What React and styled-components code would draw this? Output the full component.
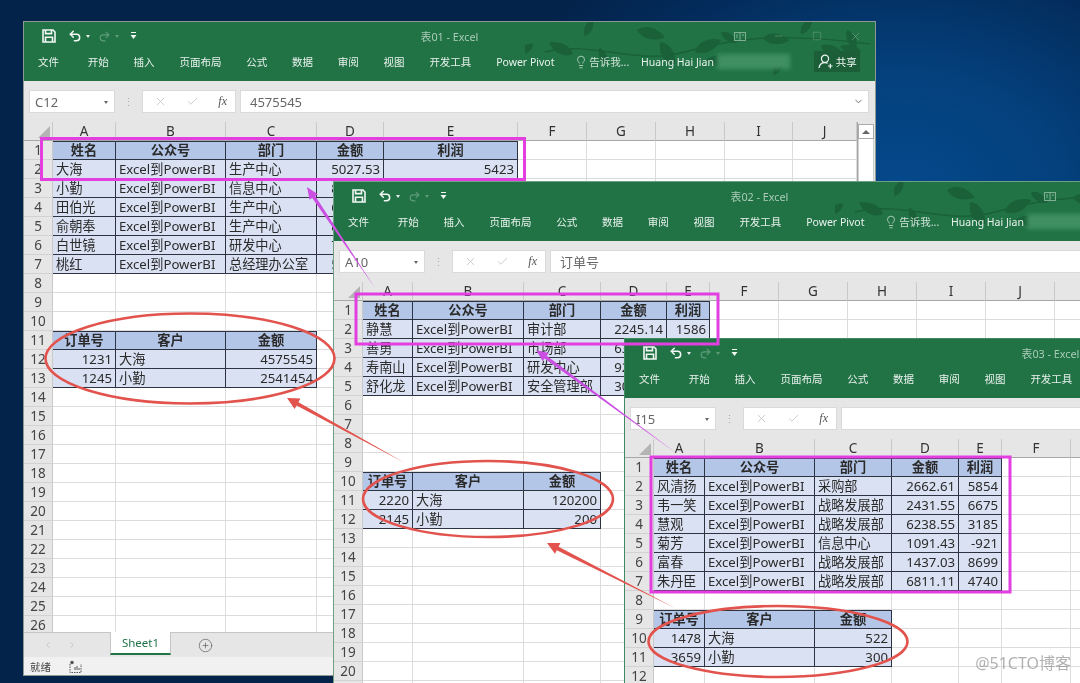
import React from 'react';
import styled, { createGlobalStyle } from 'styled-components';
import { Undo2, Redo2, Lightbulb, X, Check, Square, Minus, ChevronDown, ChevronLeft, ChevronRight, CirclePlus } from 'lucide-react';

const FONT = '"Noto Sans", "Noto Sans CJK SC", sans-serif';
const GREEN = '#217346';
const RED = '#e2534d';
const PINK = '#e23ee0';

const Global = createGlobalStyle`
  html, body { margin: 0; padding: 0; background: #04264f; }
  body { font-family: ${FONT}; }
`;

const Desktop = styled.div`
  position: relative;
  width: 1080px;
  height: 683px;
  overflow: hidden;
  filter: blur(0.45px);
  background: radial-gradient(ellipse 420px 300px at 900px 190px, #05498c 0%, #04407c 40%, #032c5c 75%, #03234b 100%), #03234b;
`;

const Win = styled.div`
  position: absolute;
  left: ${p => p.$x}px;
  top: ${p => p.$y}px;
  width: 851px;
  display: flex;
  flex-direction: column;
  background: #e6e6e6;
  box-shadow: 0 0 0 1px ${p => p.$edge};
`;

const Ribbon = styled.div`
  position: relative;
  height: 59px;
  background: ${GREEN};
  display: flex;
  flex-direction: column;
`;

const LeafArt = styled.svg`
  position: absolute;
  right: 0;
  top: 0;
`;

const TitleRow = styled.div`
  position: relative;
  height: 28px;
  display: grid;
  grid-template-columns: 1fr auto 1fr;
  align-items: center;
`;

const Quick = styled.div`
  display: flex;
  align-items: center;
  gap: ${p => p.$gap || 0}px;
  padding-left: 18px;
  color: #f2f7f4;
`;

const SaveSlot = styled.span`
  display: flex;
  margin-right: 12px;
`;

const Caret = styled.span`
  width: 0;
  height: 0;
  margin: 1px ${p => p.$after || 0}px 0 4px;
  border-left: 2.5px solid transparent;
  border-right: 2.5px solid transparent;
  border-top: 3px solid ${p => (p.$dim ? '#5f9c7c' : p.$gray ? '#666' : '#e8f0eb')};
`;

const WinTitle = styled.div`
  font-size: 10.8px;
  color: #a9cbb7;
`;

const Controls = styled.div`
  display: flex;
  justify-content: flex-end;
  align-items: center;
  gap: 27px;
  padding-right: 13px;
  color: #7fae93;
`;

const TabRow = styled.div`
  position: relative;
  flex: 1;
  display: flex;
  align-items: center;
  gap: 24.8px;
  padding: 0 15px 8px 14px;
  font-size: 10.5px;
  color: #e9f2ed;
  white-space: nowrap;
`;

const FileTab = styled.span`
  margin-right: 4px;
`;

const Tell = styled.span`
  display: flex;
  align-items: center;
  gap: 1px;
  margin-left: -5px;
  margin-right: -13px;
  color: #cfe2d7;
`;

const Smudge = styled.span`
  width: 80px;
  height: 15px;
  margin-left: -22px;
  background: #3f8f62;
  filter: blur(2px);
`;

const Share = styled.span`
  margin-left: auto;
  width: 50px;
  height: 21px;
  display: flex;
  align-items: center;
  justify-content: center;
  gap: 3px;
  background: #1b5e38;
  color: #f2f7f4;
`;

const FormulaBar = styled.div`
  height: 41px;
  box-sizing: border-box;
  padding: 9px 6px 9px 5px;
  display: flex;
  align-items: stretch;
  background: #e6e6e6;
  font-size: 13px;
  color: #666;
`;

const NameBox = styled.div`
  width: 86px;
  box-sizing: border-box;
  padding: 0 6px 0 5px;
  display: flex;
  align-items: center;
  justify-content: space-between;
  background: #fff;
  border: 1px solid #dadada;
`;

const Grip = styled.div`
  width: 27px;
  display: flex;
  align-items: center;
  justify-content: center;
  color: #aaa;
  font-size: 11px;
`;

const FxBox = styled.div`
  width: 94px;
  box-sizing: border-box;
  padding: 0 8px 0 11px;
  display: flex;
  align-items: center;
  justify-content: space-between;
  background: #fff;
  border: 1px solid #dadada;
  color: #c6c6c6;
`;

const Fx = styled.i`
  font-family: "Liberation Serif", serif;
  font-size: 12px;
  color: #555;
`;

const Input = styled.div`
  flex: 1;
  margin-left: 4px;
  box-sizing: border-box;
  padding: 0 4px 0 9px;
  display: flex;
  align-items: center;
  background: #fff;
  border: 1px solid #dadada;
  & > svg {
    margin-left: auto;
  }
`;

const SheetArea = styled.div`
  height: 510px;
  display: flex;
`;

const Sheet = styled.div`
  width: 833px;
  height: 510px;
  overflow: hidden;
  flex: none;
  display: grid;
  grid-template-columns: ${p => p.$cols};
  grid-auto-rows: 19px;
  background: #fff;
  border-right: 1px solid #a6a6a6;
`;

const Corner = styled.div`
  position: relative;
  background: #e6e6e6;
  border-right: 1px solid #c9c9c9;
  border-bottom: 1px solid #a8a8a8;
  &::after {
    content: '';
    position: absolute;
    right: 2px;
    bottom: 2px;
    border-left: 12px solid transparent;
    border-bottom: 12px solid #b4b4b4;
  }
`;

const ColHead = styled.div`
  display: flex;
  align-items: center;
  justify-content: center;
  background: #e6e6e6;
  border-right: 1px solid #c9c9c9;
  border-bottom: 1px solid #a8a8a8;
  font-size: 13.5px;
  color: #333;
`;

const RowHead = styled.div`
  display: flex;
  align-items: center;
  justify-content: center;
  background: #e6e6e6;
  border-right: 1px solid #c9c9c9;
  border-bottom: 1px solid #d2d2d2;
  font-size: 13.5px;
  color: #444;
`;

const cellBg = { head: '#b4c6e7', body: '#d9e1f2', plain: '#fff' };

const Cell = styled.div`
  min-width: 0;
  padding: 0 3px 1px;
  display: flex;
  align-items: center;
  justify-content: ${p => (p.$kind === 'head' ? 'center' : p.$right ? 'flex-end' : 'flex-start')};
  background: ${p => cellBg[p.$kind]};
  border-right: 1px solid ${p => (p.$kind === 'plain' ? '#dcdcdc' : '#2d3340')};
  border-bottom: 1px solid ${p => (p.$kind === 'plain' ? '#dcdcdc' : '#2d3340')};
  ${p => p.$kind === 'head' && 'box-shadow: inset 0 1px 0 #2d3340;'}
  font-size: 13.2px;
  font-weight: ${p => (p.$kind === 'head' ? 700 : 400)};
  color: #2a2a2a;
  white-space: nowrap;
`;

const Scroll = styled.div`
  flex: 1;
  display: flex;
  flex-direction: column;
  align-items: center;
  padding: 2px 2px 0 0;
`;

const ScrollBtn = styled.div`
  width: 14px;
  height: 13px;
  display: flex;
  align-items: center;
  justify-content: center;
  background: #fff;
  border: 1px solid #ababab;
  &::after {
    content: '';
    border-left: 4px solid transparent;
    border-right: 4px solid transparent;
    border-bottom: 4px solid #666;
  }
`;

const Thumb = styled.div`
  width: 14px;
  flex: 1;
  background: #fff;
  border: 1px solid #cfcfcf;
  border-top: none;
`;

const TabBar = styled.div`
  height: 25px;
  box-sizing: border-box;
  display: flex;
  align-items: flex-start;
  border-top: 1px solid #c6c6c6;
  padding-left: 19px;
  color: #c0c0c0;
`;

const Nav = styled.div`
  width: 67px;
  height: 24px;
  display: flex;
  align-items: center;
  gap: 14px;
`;

const SheetTab = styled.div`
  width: 59px;
  height: 21px;
  margin-top: -1px;
  display: flex;
  align-items: center;
  justify-content: center;
  background: #fff;
  border-left: 1px solid #c6c6c6;
  border-right: 1px solid #c6c6c6;
  border-bottom: 2px solid ${GREEN};
  font-size: 11.5px;
  color: ${GREEN};
`;

const AddSheet = styled.div`
  margin-left: 27px;
  height: 24px;
  display: flex;
  align-items: center;
  color: #666;
`;

const StatusBar = styled.div`
  height: 18px;
  display: flex;
  align-items: center;
  gap: 18px;
  padding-left: 6px;
  background: #f1f1f1;
  font-size: 10.5px;
  color: #444;
`;

const Marks = styled.svg`
  position: absolute;
  left: 0;
  top: 0;
  pointer-events: none;
`;

const Watermark = styled.div`
  position: absolute;
  right: 9px;
  bottom: 9px;
  font-size: 16px;
  color: rgba(125, 125, 125, 0.6);
`;

function SaveIcon() {
  return (
    <svg width="14" height="14" viewBox="0 0 14 14" fill="none" stroke="currentColor" strokeWidth="1.6">
      <path d="M1 1h10l2 2v10H1z" />
      <path d="M3.5 1v3.6h6V1M3.5 13V8.2h7V13" />
    </svg>
  );
}

function QatIcon() {
  return (
    <svg width="7" height="8" viewBox="0 0 7 8" fill="currentColor">
      <path d="M1 0h5v1H1zM0.5 3h6L3.5 7z" />
    </svg>
  );
}

function ShareIcon() {
  return (
    <svg width="15" height="15" viewBox="0 0 15 15" fill="none" stroke="currentColor" strokeWidth="1.2">
      <circle cx="7" cy="4.8" r="3.6" />
      <path d="M1 14c.4-3.2 2.6-5.4 6-5.4 1 0 1.8.2 2.6.6M10 12h4.6M12.3 9.8v4.6" />
    </svg>
  );
}

function StatusIcon() {
  return (
    <svg width="13" height="13" viewBox="0 0 13 13" fill="none" stroke="#555" strokeWidth="1">
      <path d="M1 4v8.5h11V4" strokeDasharray="1.5 1" />
      <circle cx="3" cy="2.5" r="1.8" fill="#555" stroke="none" />
      <path d="M6 10V7M8 10V6M10 10V8" />
    </svg>
  );
}

function RibbonDisplayIcon() {
  return (
    <svg width="12" height="9" viewBox="0 0 12 9" fill="none" stroke="currentColor">
      <rect x="0.5" y="0.5" width="11" height="8" />
      <path d="M6 1v7M2 3h2M8 3h2M2 5h2" />
    </svg>
  );
}

const leaf = 'M0 0C5 -7 15 -8 24 -2C17 4 7 6 0 0Z';
const leaves = [
  [8, 22, 150, 0.8], [48, 32, 210, 1.1], [60, 14, 300, 0.8], [82, 42, 250, 0.75],
  [112, 8, 20, 1.2], [135, 20, 60, 1.1], [150, 42, 230, 0.9], [170, 30, 340, 1.2],
  [196, 10, 40, 0.8], [210, 40, 190, 1.2], [238, 16, 10, 1.1], [258, 34, 120, 0.9],
  [276, 12, 310, 0.8], [296, 24, 30, 1.1], [322, 8, 70, 0.9], [336, 30, 200, 0.9],
];

function Leaves() {
  return (
    <LeafArt width="350" height="59" viewBox="0 0 350 59" fill="#1a6038">
      <path d="M20 30C70 18 110 44 160 30S250 10 345 22" fill="none" stroke="#1a6038" strokeWidth="1.4" />
      {leaves.map(([x, y, r, s]) => (
        <path key={`${x}-${y}`} d={leaf} transform={`translate(${x} ${y}) rotate(${r}) scale(${s})`} />
      ))}
    </LeafArt>
  );
}

// arrow that gets thicker towards its head, as the screenshot tool draws them
function taperedArrow(tail, head, width, headLen, headWidth) {
  const [tx, ty] = tail;
  const [hx, hy] = head;
  const len = Math.hypot(hx - tx, hy - ty);
  const ux = (hx - tx) / len;
  const uy = (hy - ty) / len;
  const nx = -uy;
  const ny = ux;
  const bx = hx - ux * headLen;
  const by = hy - uy * headLen;
  const pts = [
    [tx, ty],
    [bx + (nx * width) / 2, by + (ny * width) / 2],
    [bx + nx * headWidth, by + ny * headWidth],
    [hx, hy],
    [bx - nx * headWidth, by - ny * headWidth],
    [bx - (nx * width) / 2, by - (ny * width) / 2],
  ];
  return pts.map(p => p.join(',')).join(' ');
}

function Annotations() {
  return (
    <Marks width="1080" height="683" viewBox="0 0 1080 683">
      <g fill="none" stroke={PINK} strokeWidth="3">
        <rect x="41.5" y="138.5" width="483" height="41" />
        <rect x="356" y="294" width="362" height="50" />
        <rect x="651" y="457" width="359" height="135" />
      </g>
      <polygon points={taperedArrow([375, 288], [307, 187], 3.6, 12, 5)} fill="#cb50e2" />
      <polygon points={taperedArrow([676, 453], [536, 350], 3.6, 12, 5)} fill="#cb50e2" />
      <g fill="none" stroke={RED} strokeWidth="2.6">
        <ellipse cx="190" cy="358.5" rx="144.5" ry="45" />
        <ellipse cx="488" cy="499" rx="125" ry="38" />
        <ellipse cx="778" cy="641.5" rx="129.5" ry="35.5" />
      </g>
      <polygon points={taperedArrow([405, 463], [287, 398], 3.8, 12, 6)} fill={RED} />
      <polygon points={taperedArrow([675, 608], [547, 543], 3.8, 12, 6)} fill={RED} />
    </Marks>
  );
}

const POWER = 'Excel到PowerBI';
const letters = 'ABCDEFGHIJK'.split('');

function buildCells(people, orders, orderRow) {
  const cells = {};
  cells[1] = ['姓名', '公众号', '部门', '金额', '利润'].map(t => ({ t, kind: 'head' }));
  people.forEach((p, i) => {
    cells[i + 2] = [
      { t: p[0], kind: 'body' },
      { t: POWER, kind: 'body' },
      { t: p[1], kind: 'body' },
      { t: p[2], kind: 'body', right: true },
      { t: p[3], kind: 'body', right: true },
    ];
  });
  cells[orderRow] = ['订单号', '客户', '金额'].map(t => ({ t, kind: 'head' }));
  orders.forEach((o, i) => {
    cells[orderRow + 1 + i] = [
      { t: o[0], kind: 'body', right: true },
      { t: o[1], kind: 'body' },
      { t: o[2], kind: 'body', right: true },
    ];
  });
  return cells;
}

const books = [
  {
    title: '表01 - Excel', x: 24, y: 22, edge: '#8d9a93', name: 'C12', formula: '4575545',
    cols: [63, 110, 91, 67, 134, 69, 69, 69, 68, 64],
    cells: buildCells(
      [
        ['大海', '生产中心', '5027.53', '5423'],
        ['小勤', '信息中心', '8126.40', '3312'],
        ['田伯光', '生产中心', '6453.18', '2761'],
        ['俞朝奉', '生产中心', '8302.66', '1948'],
        ['白世镜', '研发中心', '7215.09', '4520'],
        ['桃红', '总经理办公室', '5190.27', '3076'],
      ],
      [['1231', '大海', '4575545'], ['1245', '小勤', '2541454']],
      11,
    ),
  },
  {
    title: '表02 - Excel', x: 334, y: 182, edge: '#6f9f84', name: 'A10', formula: '订单号',
    cols: [50, 111, 77, 66, 43, 69, 69, 69, 69, 69, 69],
    cells: buildCells(
      [
        ['静慧', '审计部', '2245.14', '1586'],
        ['善勇', '市场部', '6320.75', '2409'],
        ['寿南山', '研发中心', '9218.36', '5127'],
        ['舒化龙', '安全管理部', '3047.92', '3860'],
      ],
      [['2220', '大海', '120200'], ['2145', '小勤', '200']],
      10,
    ),
  },
  {
    title: '表03 - Excel', x: 625, y: 339, edge: '#3f8a60', name: 'I15', formula: '',
    cols: [51, 110, 77, 67, 43, 69, 69, 69, 69, 69, 69],
    cells: buildCells(
      [
        ['风清扬', '采购部', '2662.61', '5854'],
        ['韦一笑', '战略发展部', '2431.55', '6675'],
        ['慧观', '战略发展部', '6238.55', '3185'],
        ['菊芳', '信息中心', '1091.43', '-921'],
        ['富春', '战略发展部', '1437.03', '8699'],
        ['朱丹臣', '战略发展部', '6811.11', '4740'],
      ],
      [['1478', '大海', '522'], ['3659', '小勤', '300']],
      9,
    ),
  },
];

const tabs = ['开始', '插入', '页面布局', '公式', '数据', '审阅', '视图', '开发工具', 'Power Pivot'];
const rowNumbers = Array.from({ length: 26 }, (_, i) => i + 1);

function Workbook({ book }) {
  const cols = `29px ${book.cols.map(w => `${w}px`).join(' ')}`;
  return (
    <Win $x={book.x} $y={book.y} $edge={book.edge}>
      <Ribbon>
        <Leaves />
        <TitleRow>
          <Quick>
            <SaveSlot><SaveIcon /></SaveSlot>
            <Undo2 size={14} strokeWidth={2.6} />
            <Caret $after={8} />
            <Redo2 size={13} color="#5f9c7c" />
            <Caret $dim $after={11} />
            <QatIcon />
          </Quick>
          <WinTitle>{book.title}</WinTitle>
          <Controls>
            <RibbonDisplayIcon />
            <Minus size={12} strokeWidth={1} />
            <Square size={10} strokeWidth={1} />
            <X size={13} strokeWidth={1} />
          </Controls>
        </TitleRow>
        <TabRow>
          <FileTab>文件</FileTab>
          {tabs.map(t => <span key={t}>{t}</span>)}
          <Tell><Lightbulb size={14} strokeWidth={1.3} />告诉我...</Tell>
          <span>Huang Hai Jian</span>
          <Smudge />
          <Share><ShareIcon />共享</Share>
        </TabRow>
      </Ribbon>
      <FormulaBar>
        <NameBox>{book.name}<Caret $gray /></NameBox>
        <Grip>⋮</Grip>
        <FxBox>
          <X size={13} strokeWidth={1.6} />
          <Check size={13} strokeWidth={1.6} />
          <Fx>fx</Fx>
        </FxBox>
        <Input>{book.formula}<ChevronDown size={11} strokeWidth={2} /></Input>
      </FormulaBar>
      <SheetArea>
        <Sheet $cols={cols}>
          <Corner />
          {book.cols.map((w, c) => <ColHead key={letters[c]}>{letters[c]}</ColHead>)}
          {rowNumbers.map(r => (
            <React.Fragment key={r}>
              <RowHead>{r}</RowHead>
              {book.cols.map((w, c) => {
                const cell = book.cells[r] && book.cells[r][c];
                return (
                  <Cell key={c} $kind={cell ? cell.kind : 'plain'} $right={cell && cell.right}>
                    {cell && cell.t}
                  </Cell>
                );
              })}
            </React.Fragment>
          ))}
        </Sheet>
        <Scroll>
          <ScrollBtn />
          <Thumb />
        </Scroll>
      </SheetArea>
      <TabBar>
        <Nav>
          <ChevronLeft size={10} />
          <ChevronRight size={10} />
        </Nav>
        <SheetTab>Sheet1</SheetTab>
        <AddSheet><CirclePlus size={15} strokeWidth={1.2} /></AddSheet>
      </TabBar>
      <StatusBar>
        <span>就绪</span>
        <StatusIcon />
      </StatusBar>
    </Win>
  );
}

export default function App() {
  return (
    <Desktop>
      <Global />
      {books.map(b => <Workbook key={b.title} book={b} />)}
      <Annotations />
      <Watermark>@51CTO博客</Watermark>
    </Desktop>
  );
}
